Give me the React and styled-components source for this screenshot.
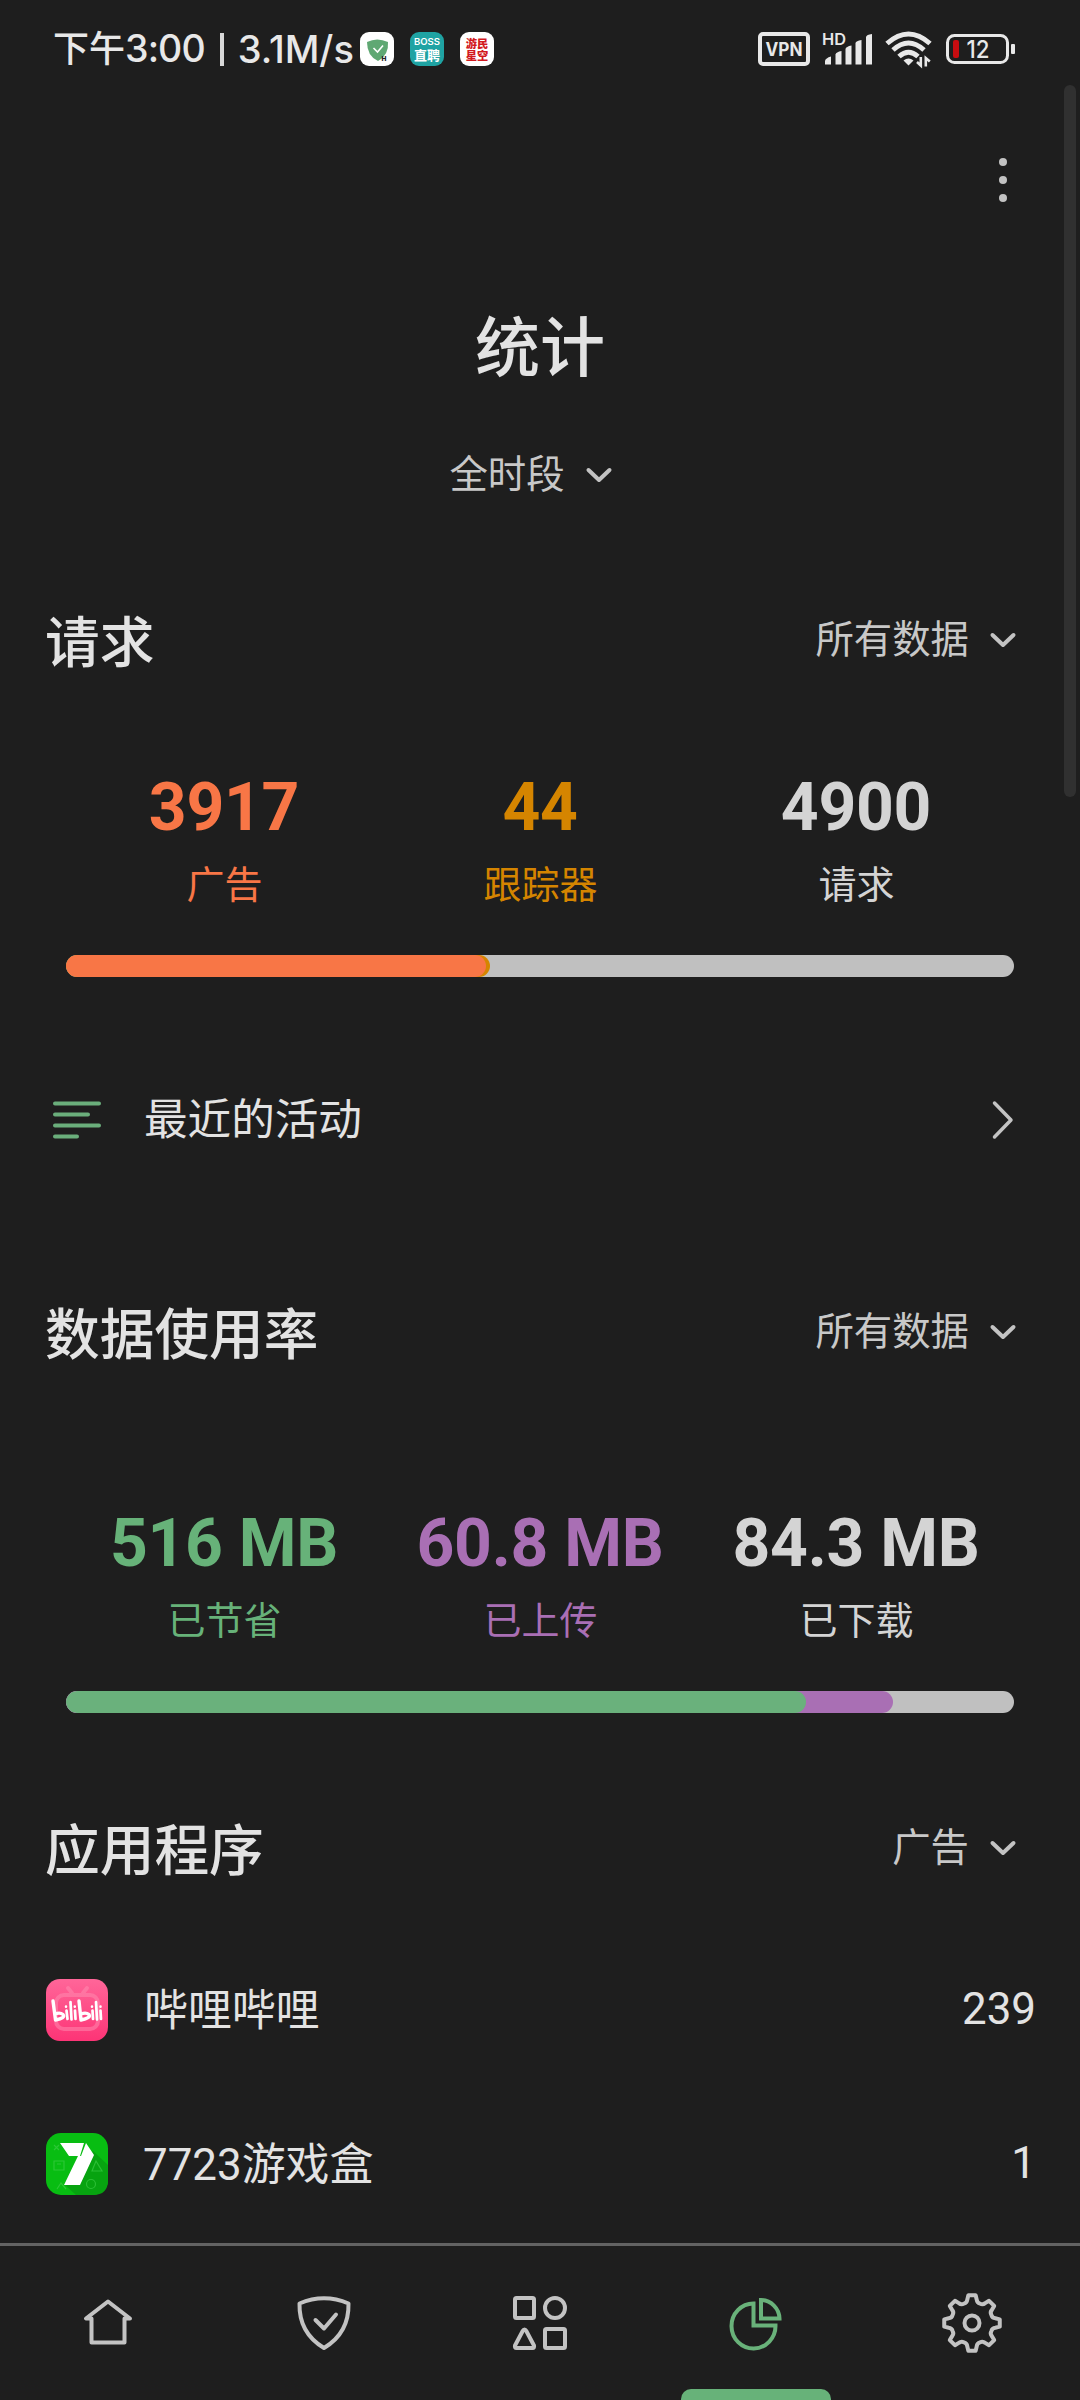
import React from "react";
import styled, { createGlobalStyle } from "styled-components";

const GlobalStyle = createGlobalStyle`
  *, *::before, *::after { box-sizing: border-box; }
  html, body { margin: 0; padding: 0; background: #1e1e1e; }
  body { font-family: Roboto, "Noto Sans CJK SC", sans-serif; color: #e3e3e3; }
  svg { display: block; flex: none; overflow: visible; }
`;

const Screen = styled.div`
  position: relative;
  display: flex;
  flex-direction: column;
  width: 1080px;
  height: 2400px;
  overflow: hidden;
  background: #1e1e1e;
`;

const StatusBar = styled.header`
  display: flex;
  align-items: center;
  justify-content: space-between;
  height: 98px;
  padding: 0 65px 0 53px;
`;

const StatusGroup = styled.div`
  display: flex;
  align-items: center;
  gap: ${(p) => p.$gap || 0}px;
`;

const Clock = styled.div`
  display: flex;
  align-items: center;
  width: 307px;
  height: 44px;
  font-family: Inter, "Noto Sans CJK SC", sans-serif;
  font-size: 38px;
  line-height: 44px;
  font-weight: 500;
  white-space: pre;
  color: #e8e8e8;
`;

const ClockPart = styled.span`
  font-size: ${(p) => p.$size || 38}px;
  letter-spacing: ${(p) => p.$track || 0}px;
`;

const Divider = styled.span`
  width: 4px;
  height: 33px;
  margin: 0 14px 0 15px;
  background: #d8d8d8;
`;

const Toolbar = styled.div`
  display: flex;
  align-items: center;
  justify-content: flex-end;
  height: 164px;
  padding-right: 73px;
`;

const MoreButton = styled.button`
  display: flex;
  flex-direction: column;
  gap: 10px;
  padding: 0;
  border: 0;
  background: none;
`;

const Dot = styled.span`
  width: 8px;
  height: 8px;
  border-radius: 50%;
  background: #c3c3c3;
`;

const Title = styled.h1`
  margin: 0;
  height: 170px;
  line-height: 175px;
  text-align: center;
  font-size: 65px;
  font-weight: 500;
`;

const Content = styled.main`
  flex: 1;
  display: flex;
  flex-direction: column;
`;

const Picker = styled.button`
  display: flex;
  align-items: center;
  gap: 19px;
  padding: 0;
  border: 0;
  background: none;
  font-family: inherit;
  font-size: 38.4px;
  line-height: 52px;
  color: #c8c8c8;
`;

const Period = styled.div`
  display: flex;
  justify-content: center;
  height: 84px;
  padding: 2px 17px 0 0;
  margin-bottom: 70px;
`;

const SectionHeader = styled.div`
  display: flex;
  align-items: center;
  justify-content: space-between;
  height: 110px;
  margin-top: ${(p) => p.$top || 0}px;
  padding: 0 62px 2px 45px;
`;

const Heading = styled.h2`
  margin: 0;
  padding-top: 6px;
  font-size: 54.7px;
  line-height: 70px;
  font-weight: 500;
`;

const Stats = styled.section`
  padding: ${(p) => p.$top}px 66px 0;
`;

const StatRow = styled.div`
  display: grid;
  grid-template-columns: repeat(3, 1fr);
  text-align: center;
`;

const Stat = styled.div`
  display: flex;
  flex-direction: column;
  gap: 12px;
  color: ${(p) => p.$color};
`;

const StatValue = styled.div`
  font-size: 66px;
  line-height: 78px;
  font-weight: 700;
  letter-spacing: -0.3px;
  white-space: nowrap;
`;

const StatLabel = styled.div`
  padding-left: 1px;
  font-size: 38px;
  line-height: 52px;
`;

const Track = styled.div`
  display: grid;
  height: 22px;
  margin-top: 44px;
  border-radius: 11px;
  overflow: hidden;
  background: #c0c0c0;
`;

const Fill = styled.div`
  grid-area: 1 / 1;
  border-radius: 11px;
  background: ${(p) => p.$color};
`;

const ActivityRow = styled.div`
  display: flex;
  align-items: center;
  height: 120px;
  margin: 83px 0 98px;
  padding: 0 66px 0 52px;
  font-size: 43.6px;
  line-height: 60px;
`;

const RowLabel = styled.span`
  flex: 1;
  padding: 2px 0 0 ${(p) => p.$left}px;
`;

const AppList = styled.div`
  padding-top: 29px;
`;

const AppRow = styled.div`
  display: flex;
  align-items: center;
  height: 154px;
  padding: 0 44px 0 46px;
  font-size: 43.9px;
  line-height: 60px;
`;

const AppCount = styled.span`
  padding-bottom: 2px;
`;

const Nav = styled.nav`
  display: flex;
  flex: none;
  height: 157px;
  border-top: 3px solid #636363;
`;

const NavItem = styled.div`
  position: relative;
  flex: 1;
  display: flex;
  justify-content: center;
  padding-top: 44px;
  color: ${(p) => (p.$active ? "#69b27a" : "#c3c3c3")};
`;

const Indicator = styled.span`
  position: absolute;
  left: 33px;
  bottom: 0;
  width: 150px;
  height: 11px;
  border-radius: 10px 10px 0 0;
  background: #67b279;
`;

const Scrollbar = styled.div`
  position: absolute;
  top: 85px;
  right: 4px;
  width: 12px;
  height: 712px;
  border-radius: 6px;
  background: #303030;
`;

const Chevron = () => (
  <svg width="30" height="20" viewBox="0 0 30 20" fill="none" stroke="#c3c3c3" strokeWidth="4" strokeLinecap="round" strokeLinejoin="round">
    <path d="M4.5 5 L15 15 L25.5 5" />
  </svg>
);

const GuardBadge = () => (
  <svg width="34" height="34" viewBox="0 0 34 34">
    <rect width="34" height="34" rx="9" fill="#fff" />
    <path d="M7 10 Q17 5 28 10 Q29 23 18 29 Q7 24 7 10Z" fill="#5fa873" />
    <path d="M13.5 16 L17.5 20 L23 13.5" fill="none" stroke="#fff" strokeWidth="1.6" />
    <text x="21.5" y="28.5" fontFamily="Roboto, sans-serif" fontSize="7" fontWeight="900" fill="#222">H</text>
  </svg>
);

const BossBadge = () => (
  <svg width="34" height="34" viewBox="0 0 34 34" fill="#fff" textAnchor="middle">
    <rect width="34" height="34" rx="9" fill="#1fa3a3" />
    <text x="17" y="13" fontFamily="Inter, sans-serif" fontSize="9.5" fontWeight="600" textLength="26" lengthAdjust="spacingAndGlyphs">BOSS</text>
    <text x="17" y="27.5" fontFamily="'Noto Sans CJK SC', sans-serif" fontSize="13" fontWeight="700">直聘</text>
  </svg>
);

const GamerBadge = () => (
  <svg width="34" height="34" viewBox="0 0 34 34" fill="#d2191e" textAnchor="middle">
    <rect width="34" height="34" rx="9" fill="#fff" />
    <text x="17" y="15.5" fontFamily="'Noto Sans CJK SC', sans-serif" fontSize="11.3" fontWeight="900">游民</text>
    <text x="17" y="27.5" fontFamily="'Noto Sans CJK SC', sans-serif" fontSize="11.3" fontWeight="900">星空</text>
  </svg>
);

const VpnIcon = () => (
  <svg width="52" height="34" viewBox="0 0 52 34">
    <rect x="2" y="2" width="48" height="30" rx="3" fill="none" stroke="#e8e8e8" strokeWidth="4" />
    <text x="26" y="23.5" textAnchor="middle" fontFamily="Inter, sans-serif" fontSize="19" fontWeight="700" fill="#e8e8e8" textLength="37" lengthAdjust="spacingAndGlyphs">VPN</text>
  </svg>
);

const SignalIcon = () => (
  <svg width="52" height="34" viewBox="0 0 52 34" fill="#e8e8e8">
    <text x="0" y="13" fontFamily="Inter, sans-serif" fontSize="16" fontWeight="600" textLength="24" lengthAdjust="spacingAndGlyphs">HD</text>
    <path d="M3 32.500 V29 Q3.500 26 9 24.500 V32.500Z" />
    <path d="M13.500 32.500 V22.500 Q14 20 19.500 19 V32.500Z" />
    <path d="M23.500 32.500 V17 Q24 14.500 29.500 13.500 V32.500Z" />
    <path d="M33.500 32.500 V11 Q34 9 39.500 8 V32.500Z" />
    <path d="M44 32.500 V5 Q44.500 2.500 50 2 V32.500Z" />
  </svg>
);

const WifiIcon = () => (
  <svg width="48" height="36" viewBox="0 0 48 36" fill="none" stroke="#e8e8e8" strokeWidth="5">
    <path d="M1 12.500 Q22.500 -6.500 44 12.500" />
    <path d="M7 19 Q22.500 5 38 19" />
    <path d="M13 25.500 Q22.500 17 32 25.500" />
    <path d="M17.500 29.500 Q22.500 25.500 27.500 29.500 L22.500 34.500Z" fill="#e8e8e8" stroke="none" />
    <path d="M34.800 26 V34.500 L31 31 M39.800 35.500 V27 L43.800 30.500" strokeWidth="2.600" />
  </svg>
);

const BatteryIcon = () => (
  <svg width="69" height="32" viewBox="0 0 69 32">
    <rect x="1.500" y="2.500" width="60" height="27" rx="7" fill="none" stroke="#e8e8e8" strokeWidth="3" />
    <rect x="65" y="11" width="4" height="10" rx="1" fill="#e8e8e8" />
    <rect x="7" y="7" width="6" height="18" rx="2" fill="#c70c10" />
    <text x="32" y="24.500" textAnchor="middle" fontFamily="Inter, sans-serif" fontSize="24" fontWeight="500" fill="#e8e8e8" textLength="23" lengthAdjust="spacingAndGlyphs">12</text>
  </svg>
);

const LinesIcon = () => (
  <svg width="50" height="40" viewBox="0 0 50 40" stroke="#6aae7b" strokeWidth="4" strokeLinecap="round">
    <path d="M3 3.500H47 M3 14.500H36 M3 25.500H47 M3 36.500H25" />
  </svg>
);

const ForwardIcon = () => (
  <svg width="22" height="40" viewBox="0 0 22 40" fill="none" stroke="#c3c3c3" strokeWidth="3.500" strokeLinecap="round" strokeLinejoin="round">
    <path d="M2.500 3 L19 20 L2.500 37" />
  </svg>
);

const BilibiliIcon = () => (
  <svg width="62" height="62" viewBox="0 0 62 62">
    <defs>
      <linearGradient id="pink" x1="0" y1="0" x2="0" y2="1">
        <stop offset="0" stopColor="#ff6699" />
        <stop offset="1" stopColor="#fd3476" />
      </linearGradient>
    </defs>
    <rect width="62" height="62" rx="14" fill="url(#pink)" />
    <g fill="none" stroke="#ff8fb3" strokeWidth="4" strokeLinecap="round" opacity="0.5">
      <rect x="10" y="16" width="42" height="34" rx="8" />
      <path d="M22 9 L26 14 M41 9 L37 14" />
    </g>
    <g fill="none" stroke="#fff" strokeLinecap="round" strokeLinejoin="round">
      <path d="M7 22 L9.500 41 Q20 39 17 35.500 Q14 33 9 35" strokeWidth="3.400" />
      <path d="M33 22 L35 41 Q45 39 43 35.500 Q40 33 35 35" strokeWidth="3.400" />
      <path d="M20.500 31.500 L21.500 40 M24.500 23 L25.500 40.500 M29 31.500 L29.500 40 M46.500 31.500 L47 40 M50 23 L51 40.500 M54.500 31.500 L55 40" strokeWidth="2.700" />
      <path d="M20 27.500 V27.800 M28.800 27.500 V27.800 M46 27.500 V27.800 M54.500 27.500 V27.800" strokeWidth="2.500" />
    </g>
  </svg>
);

const SevenIcon = () => (
  <svg width="62" height="62" viewBox="0 0 62 62">
    <rect width="62" height="62" rx="15" fill="#08bd12" />
    <path d="M47 18 L62 32 V47 Q62 62 47 62 H30 L18 51Z" fill="#07a310" />
    <g fill="none" stroke="#3fcd48" strokeWidth="1.200" opacity="0.650">
      <path d="M8 28 H18 V37 H8Z M11 31 H15 M50 28 L56 38 H46Z M8 12 L13 17 M13 12 L8 17" />
      <circle cx="45" cy="51" r="4.500" />
      <path d="M11 56 L15 50 L20 56" />
    </g>
    <path d="M14 10 H38 L34 23 H23Z M40 10 L48 22 L34 52 H18 L32 23 H35Z" fill="#fff" />
  </svg>
);

const navStroke = { fill: "none", stroke: "currentColor", strokeWidth: 4, strokeLinejoin: "round", strokeLinecap: "round" };

const HomeIcon = () => (
  <svg width="66" height="66" viewBox="0 0 66 66" {...navStroke}>
    <path d="M33 11.500 L11 28.500 H16.500 V52.500 H49.500 V28.500 H55 Z" />
  </svg>
);

const ShieldIcon = () => (
  <svg width="66" height="66" viewBox="0 0 66 66" {...navStroke}>
    <path d="M33 58 C18 49 8 34 8.500 13.500 Q33 3 57.500 13.500 C58 34 48 49 33 58Z" />
    <path d="M24.500 30 L33 38.500 L45 24.500" />
  </svg>
);

const ShapesIcon = () => (
  <svg width="66" height="66" viewBox="0 0 66 66" {...navStroke}>
    <rect x="8" y="8" width="19" height="20" rx="1.500" />
    <circle cx="48" cy="18" r="10" />
    <path d="M17.500 39.500 Q18.500 39.500 19.300 41 L27 55.500 Q27.500 58 25.500 58 H9.500 Q7.500 58 8 55.500 L15.700 41 Q16.500 39.500 17.500 39.500Z" />
    <rect x="38" y="39" width="20" height="19" rx="1.500" />
  </svg>
);

const PieIcon = () => (
  <svg width="66" height="66" viewBox="0 0 66 66" fill="none" stroke="currentColor" strokeWidth="4">
    <path d="M30.500 13.500 A22 22.500 0 1 0 52.500 35.500 H30.500 Z" />
    <path d="M38 10 A19 19 0 0 1 56.500 28.500 H38 Z" />
  </svg>
);

const gearPath = (() => {
  const polar = (angle, r) => {
    const a = ((angle - 90) * Math.PI) / 180;
    return [33 + r * Math.cos(a), 33 + r * Math.sin(a)].map((n) => n.toFixed(2)).join(" ");
  };
  let d = "";
  for (let i = 0; i < 8; i++) {
    const base = i * 45;
    d += `${i ? "L" : "M"}${polar(base - 7.5, 28)} L${polar(base + 7.5, 28)} L${polar(base + 11.5, 23.8)} `;
    d += `Q${polar(base + 14, 20.8)} ${polar(base + 22.5, 21)} Q${polar(base + 31, 20.8)} ${polar(base + 33.5, 23.8)} `;
  }
  return d + "Z";
})();

const GearIcon = () => (
  <svg width="66" height="66" viewBox="0 0 66 66" {...navStroke}>
    <path d={gearPath} />
    <circle cx="33" cy="33" r="7.500" />
  </svg>
);

const requestStats = [
  { value: "3917", label: "广告", color: "#f87646" },
  { value: "44", label: "跟踪器", color: "#d58500" },
  { value: "4900", label: "请求", color: "#d4d4d4" },
];

const usageStats = [
  { value: "516 MB", label: "已节省", color: "#67b279" },
  { value: "60.8 MB", label: "已上传", color: "#a96fb4" },
  { value: "84.3 MB", label: "已下载", color: "#d4d4d4" },
];

const requestFills = [
  { color: "#d58500", width: 44.7 },
  { color: "#f87646", width: 44.35 },
];

const usageFills = [
  { color: "#a96fb4", width: 87.25 },
  { color: "#6ab17c", width: 78.05 },
];

const apps = [
  { name: "哔哩哔哩", count: 239, Icon: BilibiliIcon, left: 36 },
  { name: "7723游戏盒", count: 1, Icon: SevenIcon, left: 35 },
];

const tabs = [
  { id: "home", Icon: HomeIcon },
  { id: "protection", Icon: ShieldIcon },
  { id: "apps", Icon: ShapesIcon },
  { id: "statistics", Icon: PieIcon, active: true },
  { id: "settings", Icon: GearIcon },
];

function StatBlock({ top, stats, fills }) {
  return (
    <Stats $top={top}>
      <StatRow>
        {stats.map((s) => (
          <Stat key={s.label} $color={s.color}>
            <StatValue>{s.value}</StatValue>
            <StatLabel>{s.label}</StatLabel>
          </Stat>
        ))}
      </StatRow>
      <Track>
        {fills.map((f) => (
          <Fill key={f.color} $color={f.color} style={{ width: `${f.width}%` }} />
        ))}
      </Track>
    </Stats>
  );
}

function Section({ title, filter, top }) {
  return (
    <SectionHeader $top={top}>
      <Heading>{title}</Heading>
      <Picker>
        {filter}
        <Chevron />
      </Picker>
    </SectionHeader>
  );
}

export default function App() {
  return (
    <>
      <GlobalStyle />
      <Screen>
        <StatusBar>
          <StatusGroup>
            <Clock>
              <ClockPart $size={36}>下午</ClockPart>
              <ClockPart $size={37.5} $track={-0.9}>3:00</ClockPart>
              <Divider />
              <ClockPart $track={0}>3.1M/s</ClockPart>
            </Clock>
            <StatusGroup $gap={16}>
              <GuardBadge />
              <BossBadge />
              <GamerBadge />
            </StatusGroup>
          </StatusGroup>
          <StatusGroup $gap={12}>
            <VpnIcon />
            <SignalIcon />
            <WifiIcon />
            <BatteryIcon />
          </StatusGroup>
        </StatusBar>
        <Content>
          <Toolbar>
            <MoreButton>
              <Dot />
              <Dot />
              <Dot />
            </MoreButton>
          </Toolbar>
          <Title>统计</Title>
          <Period>
            <Picker>
              全时段
              <Chevron />
            </Picker>
          </Period>
          <Section title="请求" filter="所有数据" />
          <StatBlock top={73} stats={requestStats} fills={requestFills} />
          <ActivityRow>
            <LinesIcon />
            <RowLabel $left={42}>最近的活动</RowLabel>
            <ForwardIcon />
          </ActivityRow>
          <Section title="数据使用率" filter="所有数据" />
          <StatBlock top={117} stats={usageStats} fills={usageFills} />
          <Section title="应用程序" filter="广告" top={81} />
          <AppList>
            {apps.map(({ name, count, Icon, left }) => (
              <AppRow key={name}>
                <Icon />
                <RowLabel $left={left}>{name}</RowLabel>
                <AppCount>{count}</AppCount>
              </AppRow>
            ))}
          </AppList>
        </Content>
        <Nav>
          {tabs.map(({ id, Icon, active }) => (
            <NavItem key={id} $active={active}>
              <Icon />
              {active && <Indicator />}
            </NavItem>
          ))}
        </Nav>
        <Scrollbar />
      </Screen>
    </>
  );
}
